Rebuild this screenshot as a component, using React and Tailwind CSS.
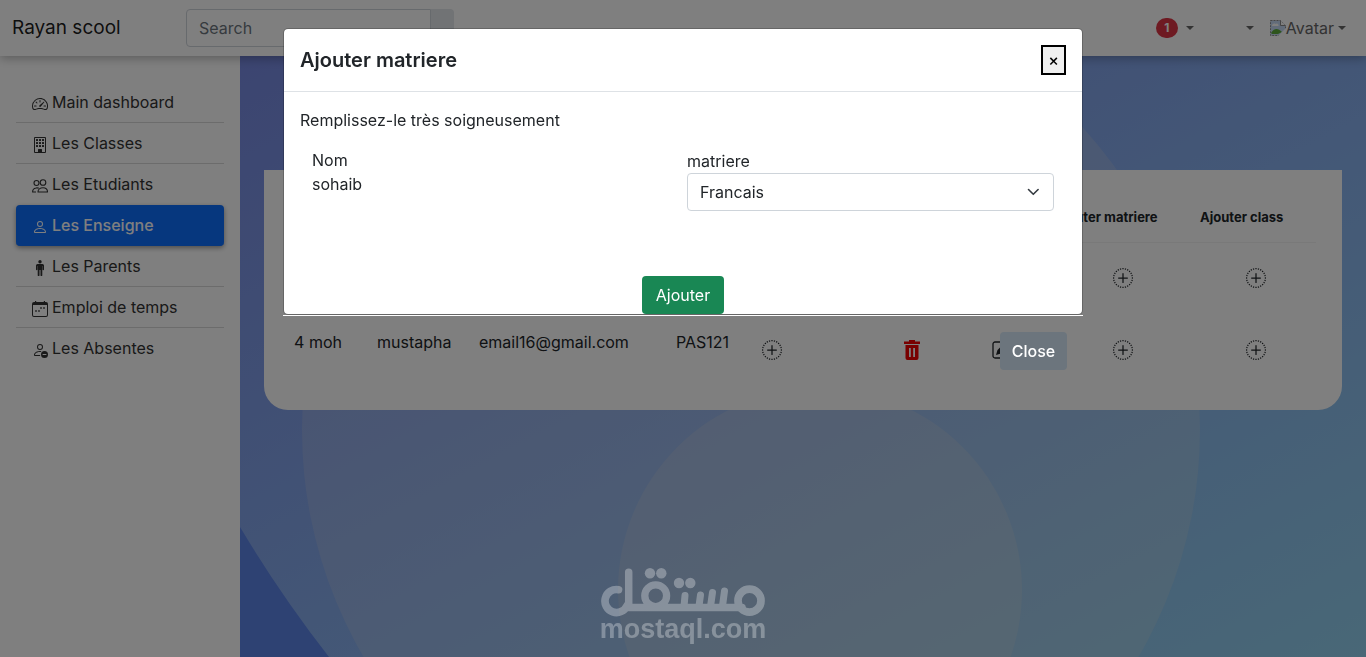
import React, { useState } from "react";
import {
  BsSpeedometer2,
  BsBuilding,
  BsPerson,
  BsPersonDash,
  BsPlusCircleDotted,
} from "react-icons/bs";

const TwoPeople = () => (
  <svg viewBox="0 0 16 16" className="w-4 h-4" fill="none" stroke="currentColor" strokeWidth="1.1">
    <circle cx="11" cy="4.500" r="2.800" />
    <path d="M6 14c0-2.500 2.200-4.200 5-4.200s4.500 1.700 4.500 4.200z" strokeLinejoin="round" />
    <circle cx="4.500" cy="5" r="2.500" />
    <path d="M6.800 10.300C6 9.800 5 9.800 4 10 2 10.300.6 12 .6 14H4" strokeLinejoin="round" />
  </svg>
);

const Man = () => (
  <svg viewBox="0 0 16 16" className="w-4 h-4" fill="currentColor">
    <circle cx="8" cy="1.700" r="1.700" />
    <path d="M5.500 4h5A1.500 1.500 0 0 1 12 5.500V9.500a.7.7 0 0 1-1.400 0V6H10.300v9.200a.8.8 0 0 1-1.800 0V10h-1v5.200a.8.8 0 0 1-1.800 0V6H5.400v3.500a.7.7 0 0 1-1.400 0v-4A1.500 1.500 0 0 1 5.500 4z" />
  </svg>
);

const CalendarDots = () => (
  <svg viewBox="0 0 16 16" className="w-4 h-4" fill="currentColor">
    <path
      fillRule="evenodd"
      d="M3 0h1.200v1h7.600V0H13v1h1a2 2 0 0 1 2 2v11a2 2 0 0 1-2 2H2a2 2 0 0 1-2-2V3a2 2 0 0 1 2-2h1zM1 4v10a1 1 0 0 0 1 1h12a1 1 0 0 0 1-1V4z"
    />
    <path d="M8.200 6.200h1.600v1.600H8.200zM11.200 6.200h1.600v1.600h-1.600zM3.200 9.200h1.600v1.600H3.200zM6.200 9.200h1.600v1.600H6.200z" />
  </svg>
);

const Trash = () => (
  <svg viewBox="0 0 16 20" className="w-4 h-5" fill="currentColor" fillRule="evenodd">
    <path d="M5 0h6v1.500h5V4H0V1.500h5zM1.500 5h13v13a2 2 0 0 1-2 2h-9a2 2 0 0 1-2-2zM5 8v9h1.800V8zM9.200 8v9H11V8z" />
  </svg>
);

const Edit = () => (
  <svg viewBox="0 0 18 18" className="w-[18px] h-[18px]">
    <rect x="1" y="1" width="16" height="16" rx="2" fill="none" stroke="currentColor" strokeWidth="1.300" />
    <path d="M4 14l1.500-5 6-6 3.500 3.500-6 6z" fill="currentColor" />
  </svg>
);

const BrokenImage = () => (
  <svg viewBox="0 0 16 16" className="w-4 h-4">
    <path d="M.5.500h10l5 5v6l-4 4H.5z" fill="#c5d9f5" stroke="#8a8a8a" strokeDasharray="2 1" />
    <path d="M2 6c0-2 2-3 3.500-2C7 2.500 9 4 8.500 6z" fill="#fff" />
    <path d="M1 13c3-5 7-5 11-1l-4 2H2z" fill="#5caa3a" />
    <path d="M16 8l-8 8h8z" fill="#fff" />
    <path d="M10.500.500v5h5" fill="#fff" stroke="#8a8a8a" />
  </svg>
);

const Caret = () => (
  <svg viewBox="0 0 8 4" className="w-2 h-1" fill="currentColor">
    <path d="M0 0h8L4 4z" />
  </svg>
);

const links = [
  { name: "Main dashboard", icon: <BsSpeedometer2 /> },
  { name: "Les Classes", icon: <BsBuilding /> },
  { name: "Les Etudiants", icon: <TwoPeople /> },
  { name: "Les Enseigne", icon: <BsPerson />, active: true },
  { name: "Les Parents", icon: <Man /> },
  { name: "Emploi de temps", icon: <CalendarDots /> },
  { name: "Les Absentes", icon: <BsPersonDash /> },
];

const teachers = [
  { id: 3, name: "sohaib", surname: "ali", email: "email15@gmail.com", code: "PAS120" },
  { id: 4, name: "moh", surname: "mustapha", email: "email16@gmail.com", code: "PAS121" },
];

const Navbar = () => (
  <header className="relative z-10 flex items-center h-14 bg-white shadow-[0_2px_10px_rgba(0,0,0,0.3)]">
    <a href="#" className="w-[186px] pl-3 text-[19px] text-black/90">
      Rayan scool
    </a>
    <form className="flex">
      <input
        type="search"
        placeholder="Search"
        aria-label="Search"
        className="w-[245px] h-[38px] px-3 rounded-l border border-[#ced4da] placeholder:text-[#6c757d] outline-none"
      />
      <button type="button" aria-label="Rechercher" className="w-[23px] h-[38px] rounded-r bg-[#e2e6ea]" />
    </form>
    <div className="flex items-center ml-auto pr-5 text-[#666]">
      <button type="button" className="flex items-center gap-2">
        <span className="flex items-center justify-center w-[22px] h-5 rounded-full bg-[#dc3545] text-white text-xs font-bold">
          1
        </span>
        <Caret />
      </button>
      <button type="button" aria-label="Langue" className="ml-13">
        <Caret />
      </button>
      <button type="button" className="flex items-center gap-1 ml-4">
        <span className="flex items-center">
          <BrokenImage />
          Avatar
        </span>
        <Caret />
      </button>
    </div>
  </header>
);

const Sidebar = () => (
  <nav className="w-60 shrink-0 px-4 pt-[26px] bg-white shadow-[0_2px_10px_rgba(0,0,0,0.1)]">
    {links.map((link, i) => (
      <a
        key={link.name}
        href="#"
        className={
          link.active
            ? "flex items-center gap-1 h-[41px] px-4 border-b border-[#0d6efd] rounded bg-[#0d6efd] text-white font-medium shadow-[0_2px_5px_rgba(0,0,0,0.4)]"
            : i < links.length - 1 && !links[i + 1].active
              ? "flex items-center gap-1 h-[41px] px-4 border-b border-black/15 text-[#333]"
              : "flex items-center gap-1 h-[41px] px-4 border-b border-transparent text-[#333]"
        }
      >
        <span className="pt-1">{link.icon}</span>
        {link.name}
      </a>
    ))}
  </nav>
);

const Waves = () => (
  <svg
    viewBox="0 0 1126 601"
    preserveAspectRatio="xMidYMid slice"
    className="absolute inset-0 w-full h-full"
  >
    <defs>
      <linearGradient id="base" x1="0" y1="0" x2="1" y2="1">
        <stop offset="0" stopColor="#788ae2" />
        <stop offset="0.550" stopColor="#88b0ee" />
        <stop offset="1" stopColor="#92d0ee" />
      </linearGradient>
    </defs>
    <rect width="1126" height="601" fill="url(#base)" />
    <path d="M0 471Q40 538 89 601H0z" fill="#5c84e6" />
    <circle cx="511" cy="374" r="449" fill="#ffe8d0" fillOpacity="0.140" />
    <circle cx="580" cy="534" r="202" fill="#ffe8d0" fillOpacity="0.140" />
  </svg>
);

const TeacherTable = () => (
  <div className="relative mx-6 mt-[114px] px-[26px] py-6 bg-white rounded-b-3xl">
    <table className="w-full table-fixed text-left text-[#212529]">
      <colgroup>
        <col className="w-[15px]" />
        <col className="w-[68px]" />
        <col className="w-[102px]" />
        <col className="w-[197px]" />
        <col className="w-[66px]" />
        <col />
        <col className="w-20" />
        <col className="w-[98px]" />
        <col className="w-[146px]" />
        <col className="w-[120px]" />
      </colgroup>
      <thead>
        <tr className="h-12 border-b border-black/5 text-[13px]">
          <th className="px-1">#</th>
          <th className="px-1">Nom</th>
          <th className="px-1">Prenom</th>
          <th className="px-1">Email</th>
          <th className="px-1">Code</th>
          <th className="px-1">Details</th>
          <th className="px-1">Supprimer</th>
          <th className="px-1">Modifier</th>
          <th className="px-1">Ajouter matriere</th>
          <th className="px-1">Ajouter class</th>
        </tr>
      </thead>
      <tbody>
        {teachers.map((t) => (
          <tr key={t.id} className="h-[72px]">
            <td className="px-1 pt-4 align-top">{t.id}</td>
            <td className="px-1 pt-4 align-top">{t.name}</td>
            <td className="px-1 pt-4 align-top">{t.surname}</td>
            <td className="px-1 pt-4 align-top">{t.email}</td>
            <td className="px-1 pt-4 align-top">{t.code}</td>
            <td className="pl-6">
              <button type="button" aria-label="Details" className="block text-xl">
                <BsPlusCircleDotted />
              </button>
            </td>
            <td>
              <button type="button" aria-label="Supprimer" className="block mx-auto text-[#f00000]">
                <Trash />
              </button>
            </td>
            <td>
              <button type="button" aria-label="Modifier" className="block mx-auto">
                <Edit />
              </button>
            </td>
            <td>
              <button type="button" aria-label="Ajouter matriere" className="block mx-auto text-xl">
                <BsPlusCircleDotted />
              </button>
            </td>
            <td>
              <button type="button" aria-label="Ajouter class" className="block mx-auto text-xl">
                <BsPlusCircleDotted />
              </button>
            </td>
          </tr>
        ))}
      </tbody>
    </table>
  </div>
);

const SubjectModal = () => {
  const [subject, setSubject] = useState("Francais");

  return (
    <div className="fixed inset-0 z-20 bg-black/50">
      <div role="dialog" aria-labelledby="modal-title" className="w-full max-w-[800px] mx-auto mt-7">
        <div className="bg-white bg-clip-padding border border-black/20 rounded-[5px]">
          <div className="flex items-center justify-between p-4 border-b border-[#dee2e6]">
            <h5 id="modal-title" className="text-xl leading-[30px] font-semibold">
              Ajouter matriere
            </h5>
            <button
              type="button"
              aria-label="Fermer"
              className="w-[25px] h-[30px] border-2 border-black bg-[#efefef] text-black font-medium leading-6"
            >
              ×
            </button>
          </div>
          <form className="px-4 pt-4">
            <p>Remplissez-le très soigneusement</p>
            <div className="grid grid-cols-2 gap-x-2 px-3 pt-4">
              <div>
                <p>Nom</p>
                <p>sohaib</p>
              </div>
              <div>
                <label htmlFor="matriere" className="block pt-px">
                  matriere
                </label>
                <div className="relative">
                  <select
                    id="matriere"
                    value={subject}
                    onChange={(e) => setSubject(e.target.value)}
                    className="block w-full h-[38px] px-3 appearance-none bg-white border border-[#ced4da] rounded"
                  >
                    <option>Francais</option>
                    <option>Arabe</option>
                    <option>Anglais</option>
                  </select>
                  <svg
                    viewBox="0 0 16 16"
                    className="absolute right-3 top-[11px] w-4 h-4 pointer-events-none"
                    fill="none"
                    stroke="#343a40"
                    strokeWidth="1.600"
                    strokeLinecap="round"
                    strokeLinejoin="round"
                  >
                    <path d="M2.500 5.500l4.800 4.800 4.800-4.800" />
                  </svg>
                </div>
              </div>
            </div>
            <div className="flex justify-center pt-[65px]">
              <button type="button" className="w-[82px] h-[38px] rounded bg-[#198754] text-white">
                Ajouter
              </button>
            </div>
          </form>
        </div>
        <div className="flex justify-end px-4 py-4 border-t border-white">
          <button
            type="button"
            className="w-[67px] h-[38px] rounded bg-[#6c757d] text-white font-medium"
          >
            Close
          </button>
        </div>
      </div>
    </div>
  );
};

const Watermark = () => (
  <div className="fixed inset-x-0 bottom-4 z-30 flex flex-col items-center opacity-30 text-white pointer-events-none">
    <svg viewBox="0 0 165 49" className="w-[165px] h-[49px]" fill="none" stroke="currentColor" strokeLinecap="round">
      <path d="M17.500 21.700a11.500 11.500 0 1 0 8.500 16" strokeWidth="7.700" />
      <path d="M27.700 4.200V39.500H141" strokeWidth="7.500" strokeLinejoin="round" />
      <circle cx="54.700" cy="27.700" r="10.900" strokeWidth="7.300" />
      <path d="M84 27.500l-1 11M99.500 27l-1.500 11M111.500 24.500l-2 14M123.500 23l-2 15" strokeWidth="7" />
      <circle cx="148.500" cy="32.700" r="11.500" strokeWidth="7.700" />
      <g fill="currentColor" stroke="none">
        <circle cx="49" cy="5.300" r="5.200" />
        <circle cx="60.300" cy="5.300" r="5.200" />
        <circle cx="78" cy="15" r="5.200" />
        <circle cx="89.300" cy="15" r="5.200" />
      </g>
    </svg>
    <span className="font-['Liberation_Sans',sans-serif] text-[27px] leading-6 font-bold">
      mostaql.com
    </span>
  </div>
);

const App = () => {
  return (
    <div className="flex flex-col min-h-screen font-[Inter,sans-serif] text-base text-[#212529]">
      <Navbar />
      <div className="flex flex-1">
        <Sidebar />
        <main className="relative flex-1 overflow-hidden">
          <Waves />
          <TeacherTable />
        </main>
      </div>
      <SubjectModal />
      <Watermark />
    </div>
  );
};

export default App;
